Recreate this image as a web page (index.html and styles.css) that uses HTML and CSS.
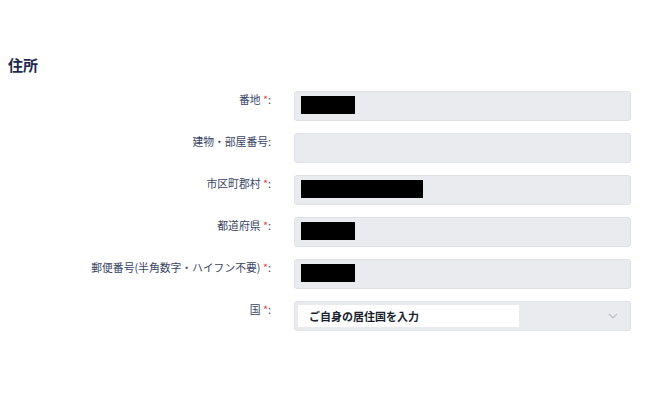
FILE: index.html
```html
<!DOCTYPE html>
<html>
<head>
    <title>住所</title>
    <link rel="stylesheet" href="styles.css">
</head>
<body>

    <h2 class="section-title">住所</h2>

    <div class="address-form">
        <label class="field-label">番地 <span class="req">*</span>:</label>
        <div class="field-input"><span class="masked" style="width: 54px"></span></div>

        <label class="field-label">建物・部屋番号:</label>
        <div class="field-input"></div>

        <label class="field-label">市区町郡村 <span class="req">*</span>:</label>
        <div class="field-input"><span class="masked" style="width: 122px"></span></div>

        <label class="field-label">都道府県 <span class="req">*</span>:</label>
        <div class="field-input"><span class="masked" style="width: 54px"></span></div>

        <label class="field-label">郵便番号(半角数字・ハイフン不要) <span class="req">*</span>:</label>
        <div class="field-input"><span class="masked" style="width: 54px"></span></div>

        <label class="field-label">国 <span class="req">*</span>:</label>
        <div class="field-input field-select">
            <span class="select-text">ご自身の居住国を入力</span>
            <svg class="chevron" width="10" height="6" viewBox="0 0 10 6">
                <path d="M1 1 L5 5 L9 1" fill="none" stroke="#b9bec7" stroke-width="1.1"/>
            </svg>
        </div>
    </div>

</body>
</html>
```

FILE: styles.css
```css
body {
    margin: 0;
    background-color: #ffffff;
    font-family: "Noto Sans CJK JP", "Noto Sans", sans-serif;
    padding: 0 8px;
}

.section-title {
    margin: 0;
    padding-top: 54px;
    font-size: 15px;
    line-height: 22px;
    font-weight: bold;
    color: #1d2a4d;
}

.address-form {
    display: grid;
    grid-template-columns: 263px 337px;
    column-gap: 23px;
    row-gap: 12px;
    margin-top: 15px;
}

.field-label {
    text-align: right;
    font-size: 10.8px;
    line-height: 16px;
    color: #3a4665;
}

.req {
    color: #e2483d;
}

.field-input {
    box-sizing: border-box;
    height: 30px;
    background-color: #e9ebee;
    border: 1px solid #dee1e5;
    border-radius: 3px;
    padding: 4px 6px;
}

.masked {
    display: block;
    height: 18px;
    background-color: #000000;
}

.field-select {
    display: flex;
    align-items: center;
    padding: 3px 12px 3px 3px;
}

.select-text {
    width: 210px;
    height: 22px;
    line-height: 22px;
    background-color: #ffffff;
    padding-left: 11px;
    font-size: 11px;
    font-weight: bold;
    color: #1a1f2e;
}

.chevron {
    margin-left: auto;
}
```
